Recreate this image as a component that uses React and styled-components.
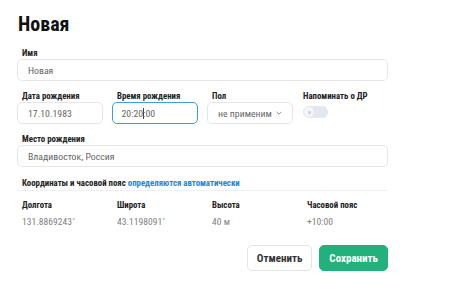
import React from "react";
import styled, { createGlobalStyle } from "styled-components";

const GlobalStyle = createGlobalStyle`
  body {
    margin: 0;
    background: #fff;
    font-family: "Roboto Condensed", "Roboto", sans-serif;
    color: #222;
  }
`;

function App() {
  return (
    <>
      <GlobalStyle />
      <Page>
        <Title>Новая</Title>

        <Field>
          <Label>Имя</Label>
          <Box>Новая</Box>
        </Field>

        <Row>
          <Field>
            <Label>Дата рождения</Label>
            <Box $width="86px">17.10.1983</Box>
          </Field>
          <Field>
            <Label>Время рождения</Label>
            <Box $width="86px" $focused>
              20:20<Caret />:00
            </Box>
          </Field>
          <Field>
            <Label>Пол</Label>
            <Box $width="86px">
              не применим
              <Chevron viewBox="0 0 10 6">
                <path d="M1 1l4 4 4-4" />
              </Chevron>
            </Box>
          </Field>
          <Field>
            <Label $flush>Напоминать о ДР</Label>
            <Toggle>
              <Knob />
            </Toggle>
          </Field>
        </Row>

        <Field>
          <Label>Место рождения</Label>
          <Box>Владивосток, Россия</Box>
        </Field>

        <SectionHead>
          Координаты и часовой пояс <Link>определяются автоматически</Link>
        </SectionHead>

        <InfoGrid>
          <InfoHead>Долгота</InfoHead>
          <InfoHead>Широта</InfoHead>
          <InfoHead>Высота</InfoHead>
          <InfoHead>Часовой пояс</InfoHead>
          <InfoValue>131.8869243˚</InfoValue>
          <InfoValue>43.1198091˚</InfoValue>
          <InfoValue>40 м</InfoValue>
          <InfoValue>+10:00</InfoValue>
        </InfoGrid>

        <Actions>
          <Button>Отменить</Button>
          <Button $primary>Сохранить</Button>
        </Actions>
      </Page>
    </>
  );
}
export default App;

const Page = styled.div`
  width: 371px;
  padding: 12px 0 0 17px;
  display: flex;
  flex-direction: column;
`;

const Title = styled.h1`
  margin: 0 0 12px 1px;
  font-size: 20px;
  line-height: 24px;
  font-weight: 700;
  color: #111;
`;

const Field = styled.div`
  display: flex;
  flex-direction: column;
  margin-bottom: 10px;
`;

const Label = styled.div`
  padding-left: ${(p) => (p.$flush ? "1px" : "5px")};
  font-size: 8.8px;
  line-height: 10px;
  font-weight: 700;
  color: #222;
  white-space: nowrap;
`;

const Box = styled.div`
  box-sizing: border-box;
  width: ${(p) => p.$width || "100%"};
  height: 22px;
  margin-top: 1px;
  padding: 0 ${(p) => (p.$focused ? "8.5px" : "10px")};
  display: flex;
  align-items: center;
  justify-content: ${(p) => (p.$focused ? "flex-start" : "space-between")};
  border: ${(p) => (p.$focused ? "1.5px solid #3d9ede" : "1px solid #e3e7ec")};
  border-radius: 5px;
  font-size: 9.8px;
  color: #666;
  white-space: nowrap;
`;

const Caret = styled.span`
  display: inline-block;
  width: 1px;
  height: 11px;
  margin-right: -1px;
  background: #444;
`;

const Chevron = styled.svg`
  flex: none;
  width: 6px;
  height: 4px;
  fill: none;
  stroke: #777;
  stroke-width: 1.4;
`;

const Row = styled.div`
  display: flex;
  gap: 9px;
`;

const Toggle = styled.div`
  box-sizing: border-box;
  width: 25px;
  height: 12px;
  margin: 5px 0 0 1px;
  padding-left: 1px;
  border-radius: 6px;
  background: #e3e7ee;
  display: flex;
  align-items: center;
`;

const Knob = styled.div`
  width: 10px;
  height: 10px;
  border-radius: 50%;
  background: #f3f5f8;
  display: flex;
  align-items: center;
  justify-content: center;
  &::after {
    content: "";
    width: 3px;
    height: 3px;
    border-radius: 50%;
    background: #c9ced6;
  }
`;

const SectionHead = styled.div`
  margin-top: 1px;
  padding: 0 0 2px 5px;
  border-bottom: 1px solid #eef0f3;
  font-size: 8.8px;
  line-height: 10px;
  font-weight: 700;
  color: #222;
  white-space: nowrap;
`;

const Link = styled.span`
  color: #1f86d3;
`;

const InfoGrid = styled.div`
  display: grid;
  grid-template-columns: repeat(4, 95px);
  row-gap: 6px;
  padding: 9px 0 0 5px;
`;

const InfoHead = styled.div`
  font-size: 8.8px;
  line-height: 10px;
  font-weight: 700;
  color: #222;
`;

const InfoValue = styled.div`
  font-size: 9.6px;
  line-height: 12px;
  color: #808080;
`;

const Actions = styled.div`
  display: flex;
  justify-content: flex-end;
  gap: 7px;
  margin-top: 17px;
`;

const Button = styled.button`
  height: 26px;
  padding: 0 9px;
  border-radius: 5px;
  border: 1px solid ${(p) => (p.$primary ? "#21b27b" : "#e0e4ea")};
  background: ${(p) => (p.$primary ? "#21b27b" : "#fff")};
  color: ${(p) => (p.$primary ? "#fff" : "#333")};
  font-family: "Roboto Condensed", "Roboto", sans-serif;
  font-size: 11px;
  font-weight: 700;
  cursor: pointer;
`;
